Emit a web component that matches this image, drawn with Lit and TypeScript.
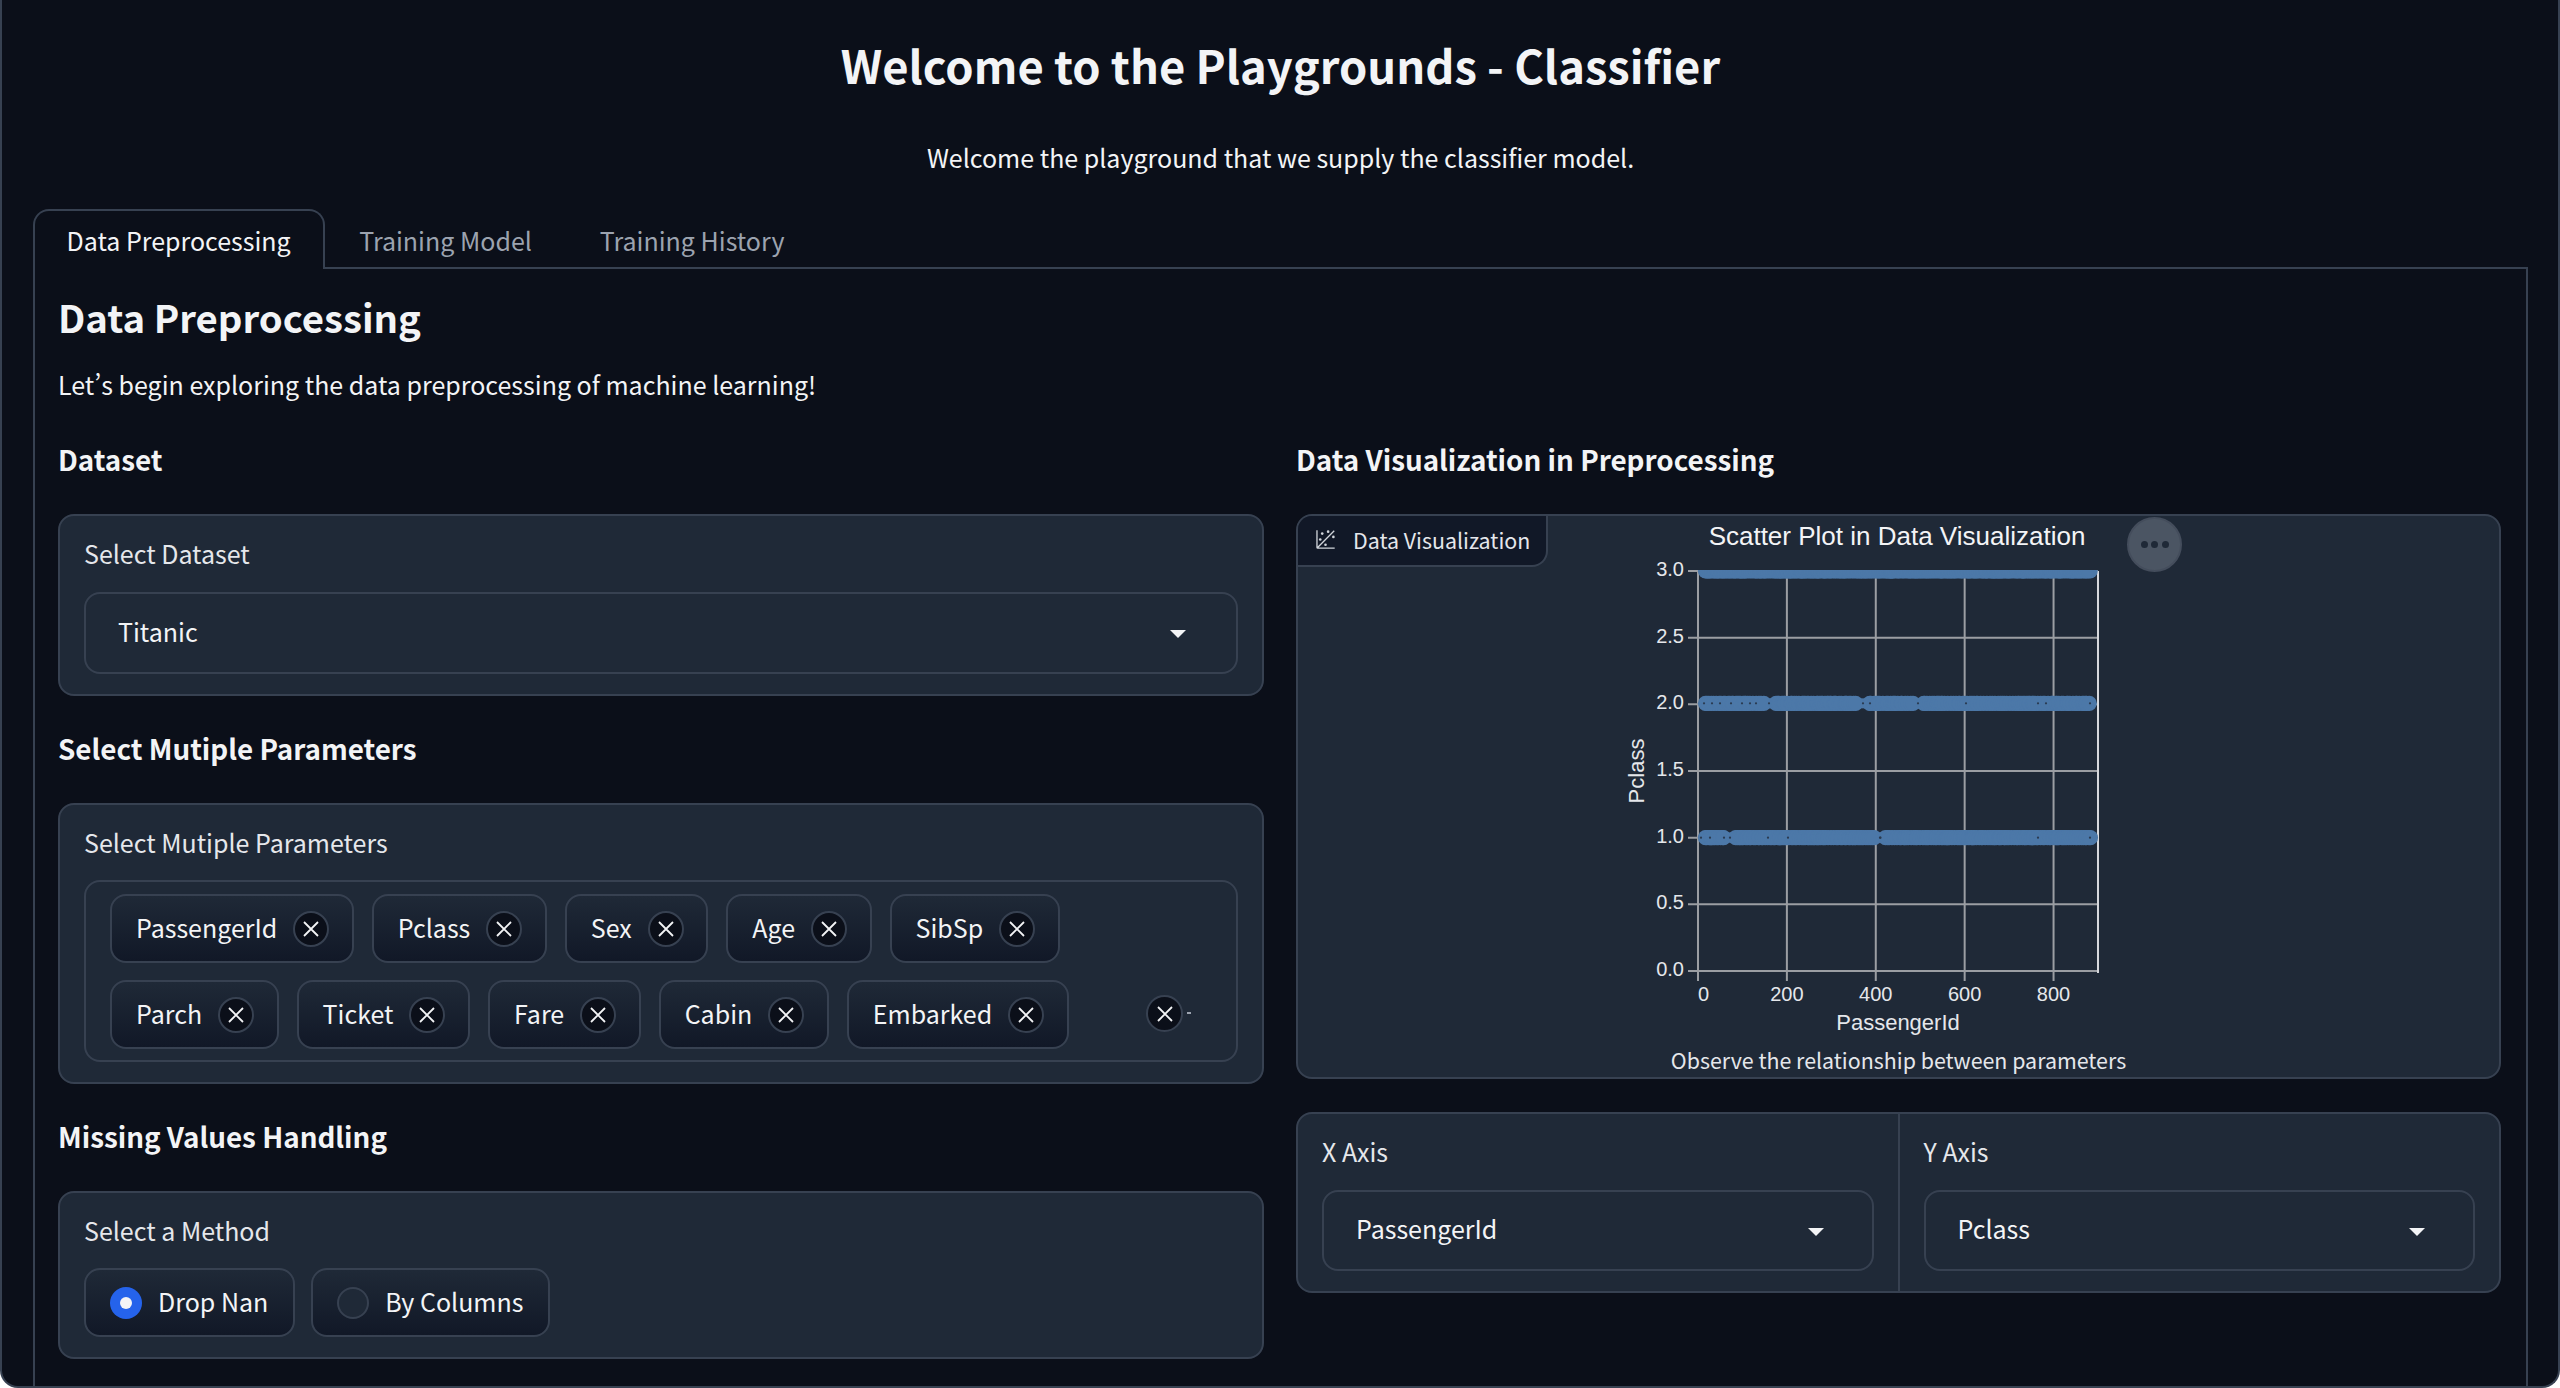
import { LitElement, html, css, svg, unsafeCSS } from "lit";
import { customElement } from "lit/decorators.js";

const FONT = unsafeCSS(`"Noto Sans CJK SC", "Noto Sans", sans-serif`);

const xIcon = html`<svg class="x" viewBox="0 0 24 24"><path d="M5 5 19 19M19 5 5 19" fill="none" stroke="currentColor" stroke-width="1.8"/></svg>`;
const caret = html`<svg class="caret" viewBox="0 0 16 8"><path d="M0 0H16L8 8Z" fill="currentColor"/></svg>`;

function rng(seed: number) {
  let s = seed;
  return () => {
    s = (s * 1664525 + 1013904223) % 4294967296;
    return s / 4294967296;
  };
}

const X0 = 400, Y0 = 55, W = 400, H = 400; // plot origin inside the chart svg

function band(val: number, seed: number, step: number, gaps: number[][], clip: boolean, dy = 0) {
  const r = rng(seed);
  const y = Y0 + H - (val / 3) * H + dy;
  const out = [];
  for (let px = 7.5; px < W - 7; px += step * (0.4 + r() * 1.2)) {
    if (gaps.some(([a, b]) => px > a && px < b)) continue;
    out.push(svg`<circle cx=${X0 + px} cy=${y} r="7.6"></circle>`);
  }
  return svg`<g class="pts" clip-path=${clip ? "url(#plot-clip)" : "none"}>
    <rect x=${X0 + 6} y=${y - 5} width=${W - 12} height="10"></rect>${out}</g>`;
}

const specks2 = [6, 14, 22, 33, 44, 52, 58, 71, 165, 172, 220, 268, 340, 348, 392];
const specks1 = [3, 12, 26, 32, 70, 90, 182, 182.5, 340, 392];

@customElement("scatter-chart")
export class ScatterChart extends LitElement {
  static styles = css`
    :host { display: block; }
    svg { display: block; width: 1200px; height: 530px; }
    .grid { stroke: #9b9ea3; stroke-width: 2; fill: none; }
    .pts circle, .pts rect { fill: #4c78a8; }
    .tick { font: 20px "Liberation Sans", sans-serif; fill: #e5e7eb; }
    .atitle { font: 22px "Liberation Sans", sans-serif; fill: #e5e7eb; }
    .title { font: 26px "Liberation Sans", sans-serif; fill: #f3f4f6; }
    .edge { stroke: #d6d8dc; stroke-width: 2; fill: none; }
    .speck { fill: #2a3a50; }
  `;
  render() {
    const xs = [0, 200, 400, 600, 800];
    const ys = [0, 0.5, 1, 1.5, 2, 2.5, 3];
    const y2 = Y0 + H - (2 / 3) * H - 1;
    const y1 = Y0 + H - (1 / 3) * H;
    return html`<svg viewBox="0 0 1200 530">
      <defs><clipPath id="plot-clip"><rect x=${X0 - 1} y=${Y0 - 1} width=${W + 1} height=${H}></rect></clipPath></defs>
      <text class="title" x="599" y="29" text-anchor="middle">Scatter Plot in Data Visualization</text>
      ${xs.map((v) => {
        const x = X0 + (v / 900) * W;
        return svg`<line class="grid" x1=${x} x2=${x} y1=${Y0} y2=${Y0 + H + 10}></line>
          <text class="tick" x=${x} y=${Y0 + H + 30} text-anchor=${v === 0 ? "start" : "middle"}>${v}</text>`;
      })}
      ${ys.map((v) => {
        const y = Y0 + H - (v / 3) * H;
        return svg`<line class="grid" x1=${X0 - 10} x2=${X0 + W} y1=${y} y2=${y}></line>
          <text class="tick" x=${X0 - 14} y=${y + 5} text-anchor="end">${v.toFixed(1)}</text>`;
      })}
      <line class="edge" x1=${X0 + W} x2=${X0 + W} y1=${Y0} y2=${Y0 + H + 2}></line>
      ${band(3, 11, 1.6, [], true)}
      ${band(2, 23, 2.2, [[66, 76], [160, 170], [215, 225]], false, -1)}
      ${band(1, 37, 1.9, [[27, 36], [177, 187]], false)}
      ${specks2.map((x) => svg`<circle class="speck" cx=${X0 + x} cy=${y2} r="1.1"></circle>`)}
      ${specks1.map((x) => svg`<circle class="speck" cx=${X0 + x} cy=${y1} r="1.1"></circle>`)}
      <text class="atitle" x="600" y=${Y0 + H + 59} text-anchor="middle">PassengerId</text>
      <text class="atitle" transform="translate(346 ${Y0 + 200}) rotate(-90)" text-anchor="middle">Pclass</text>
    </svg>`;
  }
}

@customElement("app-root")
export class AppRoot extends LitElement {
  static styles = css`
    :host { display: block; font-family: ${FONT}; color: #f3f4f6; }
    * { box-sizing: border-box; }
    .frame { height: 1388px; background: #0b0f19; border: 2px solid #374151; border-top: 0; border-radius: 0 0 18px 18px; overflow: hidden; padding: 0 30px 0 31px; }
    h1 { margin: 0; padding-top: 39px; height: 124px; line-height: 50px; font-size: 45.3px; font-weight: 700; text-align: center; }
    .sub { margin: 0; height: 85px; padding-top: 13px; line-height: 40px; font-size: 25px; text-align: center; }
    .tabs { display: flex; height: 60px; }
    .tab { display: flex; align-items: center; padding: 3px 34px 0; font-size: 25px; color: #9ca3af; border-bottom: 2px solid #374151; }
    .tab.on { color: #f3f4f6; border: 2px solid #374151; border-bottom: 0; border-radius: 16px 16px 0 0; padding: 0 32.5px 0 31.5px; }
    .tab.fill { flex: 1; padding: 0; }
    .panel { border: 2px solid #374151; border-top: 0; padding: 0 25px 0 23px; height: 1200px; }
    h2 { margin: 0; padding-top: 24px; height: 72px; line-height: 48px; font-size: 38.3px; font-weight: 700; }
    .lead { margin: 0; height: 99px; padding-top: 22.5px; line-height: 40px; font-size: 25px; font-variant-east-asian: proportional-width; }
    .cols { display: grid; grid-template-columns: 1206px 1205px; column-gap: 32px; }
    h3 { margin: 0; height: 40px; line-height: 38px; font-size: 27.8px; font-weight: 700; }
    .card { margin-top: 34px; background: #1f2937; border: 2px solid #374151; border-radius: 16px; padding: 24px 24px 20px; }
    .card + h3 { margin-top: 33px; }
    .label { height: 32px; line-height: 26px; font-size: 25px; color: #e5e7eb; margin-bottom: 20px; }
    .m19 { margin-bottom: 19px; }
    .select { position: relative; height: 82px; border: 2px solid #374151; border-radius: 16px; display: flex; align-items: center; justify-content: space-between; padding: 0 48px 5px 32px; font-size: 25px; }
    .select.wide { padding-right: 50px; }
    .caret { width: 16px; height: 8px; flex: none; margin-top: 7px; color: #f3f4f6; }
    .multi { position: relative; display: flex; flex-direction: column; gap: 17px; border: 2px solid #374151; border-radius: 16px; padding: 12px 24px 11px; margin-top: -1px; }
    .row { display: flex; gap: 18px; }
    .chip, .radio { display: inline-flex; align-items: center; gap: 16px; height: 69px; border: 2px solid #374151; border-radius: 16px; font-size: 25px; background: linear-gradient(to bottom, #1f2937, #111827); }
    .chip { padding: 0 22.5px 0 24px; }
    .radio { padding: 0 25px 0 24px; }
    .t { margin-bottom: 3px; }
    .xbtn { width: 36px; height: 36px; border-radius: 50%; background: #0b0f19; border: 2px solid #374151; display: flex; align-items: center; justify-content: center; flex: none; }
    .x { width: 24px; height: 24px; color: #f3f4f6; }
    .clear { position: absolute; right: 53px; top: 113px; width: 37px; height: 37px; }
    .tinycaret { position: absolute; right: 45px; top: 130px; width: 4px; height: 2px; background: #9ca3af; }
    .radios { display: flex; gap: 16px; }
    .dot { width: 32px; height: 32px; border-radius: 50%; border: 2px solid #374151; background: #1f2937; flex: none; }
    .dot.on { background: #2563eb; border: 0; display: flex; align-items: center; justify-content: center; }
    .dot.on::after { content: ""; width: 12px; height: 12px; border-radius: 50%; background: #f3f4f6; }
    .plot { position: relative; padding: 0; height: 565px; }
    .plot-tag { position: absolute; left: 0; top: 0; height: 51px; width: 250px; display: flex; align-items: center; gap: 17px; padding: 0 0 2px 17px; font-size: 21.4px; white-space: nowrap; background: #111827; border-right: 2px solid #374151; border-bottom: 2px solid #374151; border-radius: 14px 0 16px 0; color: #e5e7eb; }
    .plot-tag svg { width: 21px; height: 21px; flex: none; color: #d1d5db; }
    .more { position: absolute; left: 829px; top: 1px; width: 55px; height: 55px; border-radius: 50%; background: #4b5563; border: 2px solid #444d5c; display: flex; align-items: center; justify-content: center; gap: 3.5px; }
    .more i { width: 7px; height: 7px; border-radius: 50%; background: #1f2937; display: block; }
    .caption { text-align: center; font-size: 21.4px; line-height: 27px; height: 31px; color: #e5e7eb; }
    .axes { display: flex; padding: 0; margin-top: 33px; }
    .axis { flex: 1; padding: 24px 24px 20px; min-width: 0; }
    .axis + .axis { border-left: 2px solid #374151; }
    .axes .select { height: 81px; }
  `;
  render() {
    const rows = [
      ["PassengerId", "Pclass", "Sex", "Age", "SibSp"],
      ["Parch", "Ticket", "Fare", "Cabin", "Embarked"],
    ];
    return html`<div class="frame">
      <h1>Welcome to the Playgrounds - Classifier</h1>
      <p class="sub">Welcome the playground that we supply the classifier model.</p>
      <div class="tabs">
        <div class="tab on">Data Preprocessing</div>
        <div class="tab">Training Model</div>
        <div class="tab">Training History</div>
        <div class="tab fill"></div>
      </div>
      <div class="panel">
        <h2>Data Preprocessing</h2>
        <p class="lead">Let’s begin exploring the data preprocessing of machine learning!</p>
        <div class="cols">
          <div>
            <h3>Dataset</h3>
            <div class="card">
              <div class="label">Select Dataset</div>
              <div class="select wide"><span>Titanic</span>${caret}</div>
            </div>
            <h3>Select Mutiple Parameters</h3>
            <div class="card">
              <div class="label">Select Mutiple Parameters</div>
              <div class="multi">
                ${rows.map((row) => html`<div class="row">${row.map((r) => html`<span class="chip"><span class="t">${r}</span><span class="xbtn">${xIcon}</span></span>`)}</div>`)}
                <span class="xbtn clear">${xIcon}</span><span class="tinycaret"></span>
              </div>
            </div>
            <h3>Missing Values Handling</h3>
            <div class="card">
              <div class="label m19">Select a Method</div>
              <div class="radios">
                <span class="radio"><span class="dot on"></span><span class="t">Drop Nan</span></span>
                <span class="radio"><span class="dot"></span><span class="t">By Columns</span></span>
              </div>
            </div>
          </div>
          <div>
            <h3>Data Visualization in Preprocessing</h3>
            <div class="card plot">
              <div class="plot-tag">
                <svg viewBox="0 0 32 32" fill="currentColor"><circle cx="20" cy="4" r="2"/><circle cx="8" cy="16" r="2"/><circle cx="28" cy="12" r="2"/><circle cx="11" cy="7" r="2"/><circle cx="16" cy="24" r="2"/><path d="M30 3.413L28.586 2L4 26.585V2H2v26a2 2 0 0 0 2 2h26v-2H5.413Z"/></svg>
                Data Visualization
              </div>
              <scatter-chart></scatter-chart>
              <div class="caption">Observe the relationship between parameters</div>
              <div class="more"><i></i><i></i><i></i></div>
            </div>
            <div class="card axes">
              <div class="axis"><div class="label">X Axis</div><div class="select"><span>PassengerId</span>${caret}</div></div>
              <div class="axis"><div class="label">Y Axis</div><div class="select"><span>Pclass</span>${caret}</div></div>
            </div>
          </div>
        </div>
      </div>
    </div>`;
  }
}
